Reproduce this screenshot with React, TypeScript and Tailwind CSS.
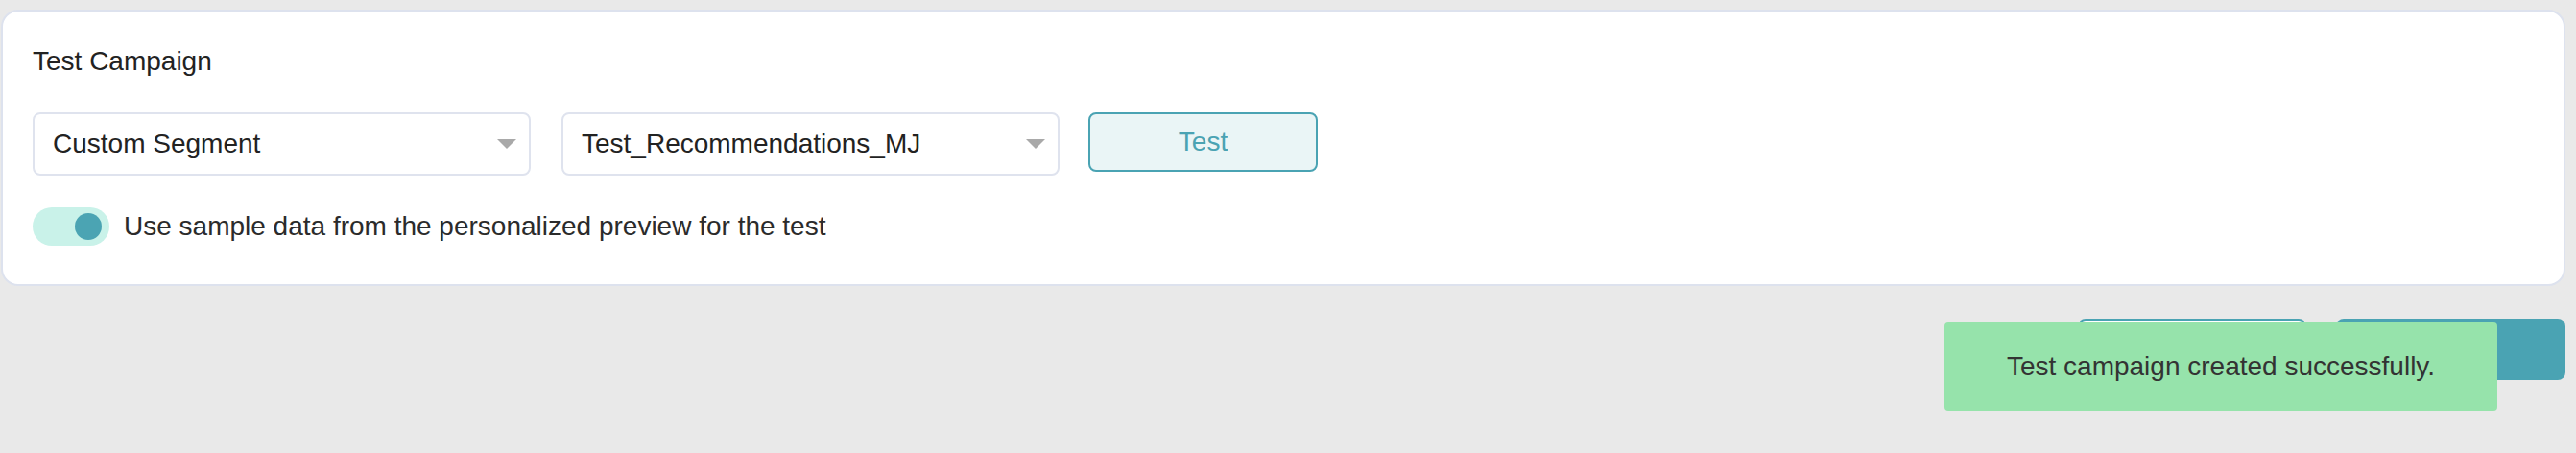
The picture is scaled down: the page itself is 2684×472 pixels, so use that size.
import React from 'react'

const font = { fontFamily: '"Liberation Sans", Arial, sans-serif' }

function Select({ value }: { value: string }) {
  return (
    <div className="flex h-[66px] w-[519px] items-center justify-between rounded-[8px] border-2 border-[#dfe3ee] bg-white pl-[19px] pr-[13px]">
      <span className="text-[28px] leading-[32px] text-[#222]">{value}</span>
      <svg width="20" height="10" viewBox="0 0 20 10">
        <path d="M0 0 L20 0 L10 10 Z" fill="#a9a9a9" />
      </svg>
    </div>
  )
}

export default function App() {
  return (
    <div className="relative h-[472px] w-full bg-[#e9e9e9] pl-px pr-[11px] pt-[10px]" style={font}>
      {/* Test campaign card */}
      <div className="h-[288px] rounded-[18px] border-2 border-[#dde2ee] bg-white px-[31px] pt-[37px]">
        <h2 className="text-[28px] leading-[30px] text-[#222]">Test Campaign</h2>

        <div className="mt-[38px] flex items-start">
          <Select value="Custom Segment" />
          <div className="ml-[32px]">
            <Select value="Test_Recommendations_MJ" />
          </div>
          <button className="ml-[30px] h-[62px] w-[239px] rounded-[8px] border-2 border-[#4aa3b3] bg-[#eaf5f6] text-[28px] text-[#4aa3b3]">
            Test
          </button>
        </div>

        <div className="mt-[33px] flex h-[40px] items-center">
          <div className="flex h-[40px] w-[80px] items-center justify-end rounded-full bg-[#c9f2e9] pr-[8px]">
            <div className="h-[28px] w-[28px] rounded-full bg-[#4ba4b3]" />
          </div>
          <span className="ml-[15px] text-[28px] leading-[40px] text-[#2b2b2b]">
            Use sample data from the personalized preview for the test
          </span>
        </div>
      </div>

      {/* Footer actions */}
      <div className="mt-[34px] flex justify-end gap-[31px]">
        <button className="h-[64px] w-[238px] rounded-[8px] border-2 border-[#4aa3b3] bg-white" />
        <button className="h-[64px] w-[239px] rounded-[8px] bg-[#4aa3b3]" />
      </div>

      {/* Toast */}
      <div className="absolute right-[82px] top-[336px] flex h-[92px] w-[576px] items-center justify-center rounded-[4px] bg-[#96e3ab]">
        <span className="text-[28px] text-[#333]">Test campaign created successfully.</span>
      </div>
    </div>
  )
}
